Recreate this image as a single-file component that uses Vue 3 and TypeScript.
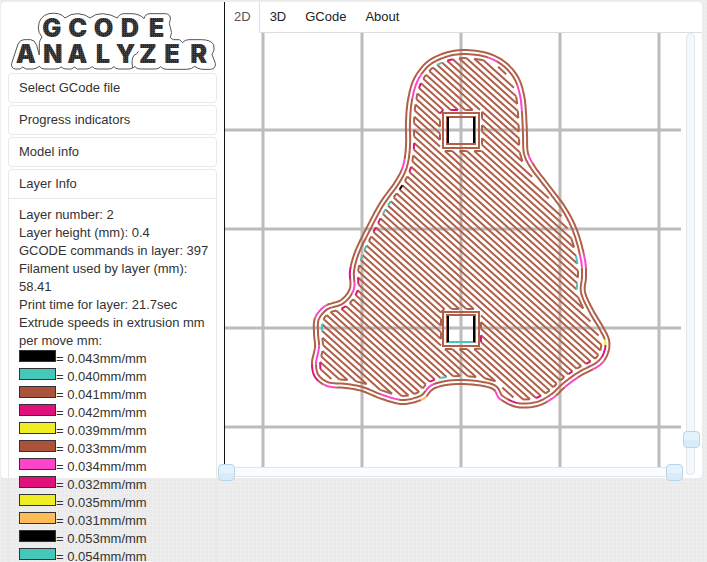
<script setup lang="ts">
import { ref } from 'vue'

type Point = [number, number]
interface Spot { x: number; y: number; r: number; color: string; ring?: number }
interface Stroke { d: string; color: string }

const BROWN = '#b05f48'
const TEAL = '#45c7ba'
const MAGENTA = '#e0117b'
const PINK = '#ff44cc'
const YELLOW = '#eeee22'
const ORANGE = '#ffbb55'

const tabs = ['2D', '3D', 'GCode', 'About']
const activeTab = ref('2D')
const layer = ref(7)
const progressStart = ref(0)
const progressEnd = ref(100)

const closedPanels = ['Select GCode file', 'Progress indicators', 'Model info']

const layerInfo = [
  'Layer number: 2',
  'Layer height (mm): 0.4',
  'GCODE commands in layer: 397',
  'Filament used by layer (mm): 58.41',
  'Print time for layer: 21.7sec',
  'Extrude speeds in extrusion mm per move mm:',
]

const speeds = [
  { color: '#000000', value: '0.043' },
  { color: TEAL, value: '0.040' },
  { color: '#a9533a', value: '0.041' },
  { color: MAGENTA, value: '0.042' },
  { color: YELLOW, value: '0.039' },
  { color: '#a9533a', value: '0.033' },
  { color: PINK, value: '0.034' },
  { color: MAGENTA, value: '0.032' },
  { color: YELLOW, value: '0.035' },
  { color: ORANGE, value: '0.031' },
  { color: '#000000', value: '0.053' },
  { color: TEAL, value: '0.054' },
]

const gridX = [263, 362, 461, 560, 659]
const gridY = [130, 229, 328, 427]

// Outer perimeter of the printed layer, counter-clockwise from the top
const outline: Point[] = [
  [464, 50], [445, 53], [427, 62], [414, 79], [408, 100], [406, 122], [406, 146],
  [403, 166], [395, 182], [380, 203], [366, 229], [355, 252], [350, 271], [350, 288],
  [341, 300], [325, 306], [315, 318], [314, 333], [315, 347], [312, 363], [315, 377],
  [327, 386], [346, 388], [362, 391], [382, 399], [403, 404], [423, 399], [435, 388],
  [460, 384], [491, 388], [500, 399], [517, 407], [537, 406], [553, 398], [565, 387],
  [580, 376], [600, 365], [608, 353], [609, 340], [603, 327], [593, 310], [585, 292],
  [586, 277], [585, 260], [578, 233], [567, 210], [551, 188], [535, 167], [528, 153],
  [527, 135], [526, 113], [524, 95], [518, 77], [505, 62], [487, 53],
]

const holes: Point[][] = [
  [[440, 110], [482, 110], [482, 151], [440, 151]],
  [[441, 309], [481, 309], [481, 349], [441, 349]],
]

const ringSpots: Spot[] = [
  { x: 415, y: 83, r: 13, color: PINK, ring: 1 },
  { x: 520, y: 98, r: 13, color: PINK, ring: 1 },
  { x: 495, y: 59, r: 5, color: PINK, ring: 1 },
  { x: 404, y: 164, r: 6, color: PINK, ring: 0 },
  { x: 530, y: 160, r: 5, color: PINK, ring: 0 },
  { x: 350, y: 272, r: 7, color: MAGENTA, ring: 0 },
  { x: 354, y: 286, r: 6, color: PINK, ring: 1 },
  { x: 321, y: 310, r: 9, color: PINK, ring: 0 },
  { x: 318, y: 355, r: 10, color: PINK, ring: 1 },
  { x: 313, y: 372, r: 9, color: MAGENTA, ring: 0 },
  { x: 328, y: 386, r: 6, color: PINK, ring: 0 },
  { x: 388, y: 397, r: 9, color: PINK, ring: 1 },
  { x: 423, y: 399, r: 4, color: ORANGE, ring: 0 },
  { x: 430, y: 389, r: 5, color: PINK, ring: 1 },
  { x: 501, y: 394, r: 6, color: PINK, ring: 0 },
  { x: 512, y: 401, r: 6, color: MAGENTA, ring: 1 },
  { x: 551, y: 399, r: 6, color: PINK, ring: 0 },
  { x: 570, y: 382, r: 8, color: PINK, ring: 0 },
  { x: 598, y: 366, r: 7, color: PINK, ring: 0 },
  { x: 604, y: 352, r: 6, color: MAGENTA, ring: 1 },
  { x: 605, y: 343, r: 3, color: YELLOW, ring: 1 },
  { x: 585, y: 262, r: 6, color: PINK, ring: 0 },
  { x: 581, y: 262, r: 6, color: PINK, ring: 1 },
]

const turnSpots: Spot[] = [
  [417, 85, MAGENTA], [450, 57, MAGENTA], [439, 63, TEAL], [474, 58, TEAL], [505, 69, PINK],
  [414, 101, TEAL], [520, 151, TEAL], [413, 148, MAGENTA], [410, 171, MAGENTA],
  [401, 189, '#000000'], [389, 205, TEAL], [383, 213, TEAL], [378, 221, MAGENTA],
  [373, 229, MAGENTA], [363, 248, TEAL], [361, 258, TEAL], [357, 281, MAGENTA],
  [354, 292, MAGENTA], [341, 306, MAGENTA], [321, 327, TEAL], [319, 365, MAGENTA],
  [323, 377, YELLOW], [436, 381, MAGENTA], [448, 379, TEAL], [578, 263, TEAL],
  [578, 290, TEAL], [534, 398, MAGENTA], [543, 394, MAGENTA], [573, 371, MAGENTA],
  [591, 360, MAGENTA], [502, 391, TEAL], [481, 338, MAGENTA], [441, 317, MAGENTA],
  [443, 110, MAGENTA], [457, 110, MAGENTA], [471, 151, MAGENTA],
].map(([x, y, color]) => ({ x: x as number, y: y as number, r: 5, color: color as string }))

function smooth(points: Point[], steps = 8): Point[] {
  const n = points.length
  const result: Point[] = []
  for (let i = 0; i < n; i++) {
    const [a, b, c, d] = [-1, 0, 1, 2].map((o) => points[(i + o + n) % n])
    for (let s = 0; s < steps; s++) {
      const t = s / steps
      const at = (k: 0 | 1) =>
        0.5 * (2 * b[k] + (c[k] - a[k]) * t + (2 * a[k] - 5 * b[k] + 4 * c[k] - d[k]) * t * t
          + (3 * b[k] - a[k] - 3 * c[k] + d[k]) * t * t * t)
      result.push([at(0), at(1)])
    }
  }
  return result
}

function inset(points: Point[], distance: number): Point[] {
  const n = points.length
  return points.map(([x, y], i) => {
    const p = points[(i - 3 + n) % n]
    const q = points[(i + 3) % n]
    const dx = q[0] - p[0]
    const dy = q[1] - p[1]
    const len = Math.hypot(dx, dy) || 1
    return [x + (dy / len) * distance, y - (dx / len) * distance]
  })
}

const toPath = (points: Point[]) =>
  'M' + points.map(([x, y]) => `${x.toFixed(1)} ${y.toFixed(1)}`).join('L')

function spotColor(p: Point, spots: Spot[]): string {
  const hit = spots.find((s) => Math.hypot(s.x - p[0], s.y - p[1]) <= s.r)
  return hit ? hit.color : BROWN
}

function colorRing(points: Point[], ring: number): Stroke[] {
  const spots = ringSpots.filter((s) => s.ring === ring)
  const strokes: Stroke[] = []
  let run: Point[] = [points[0]]
  let color = spotColor(points[0], spots)
  for (let i = 1; i <= points.length; i++) {
    const p = points[i % points.length]
    run.push(p)
    const next = spotColor(p, spots)
    if (next !== color || i === points.length) {
      strokes.push({ d: toPath(run), color })
      run = [p]
      color = next
    }
  }
  return strokes
}

const SLOPE = 0.9
const SPACING = 6.6

function hatch(boundary: Point[]): Stroke[] {
  const shapes = [boundary, ...holes]
  const rows: [Point, Point][][] = []
  for (let c = -520; c < 150; c += SPACING) {
    const hits: Point[] = []
    for (const shape of shapes) {
      shape.forEach((p, i) => {
        const q = shape[(i + 1) % shape.length]
        const fp = p[1] - SLOPE * p[0] - c
        const fq = q[1] - SLOPE * q[0] - c
        if (fp < 0 !== fq < 0) {
          const t = fp / (fp - fq)
          hits.push([p[0] + (q[0] - p[0]) * t, p[1] + (q[1] - p[1]) * t])
        }
      })
    }
    hits.sort((u, v) => u[0] - v[0])
    const row: [Point, Point][] = []
    for (let i = 0; i + 1 < hits.length; i += 2) row.push([hits[i], hits[i + 1]])
    rows.push(row)
  }
  const strokes: Stroke[] = []
  rows.forEach((row, k) => {
    const side = k % 2
    for (const segment of row) {
      strokes.push({ d: toPath(segment), color: BROWN })
      const from = segment[side]
      const to = (rows[k + 1] ?? [])
        .map((s) => s[side])
        .find((p) => Math.hypot(p[0] - from[0], p[1] - from[1]) < 13)
      if (to) {
        const mid: Point = [(from[0] + to[0]) / 2, (from[1] + to[1]) / 2]
        strokes.push({ d: toPath([from, to]), color: spotColor(mid, turnSpots) })
      }
    }
  })
  return strokes.sort((a, b) => Number(a.color !== BROWN) - Number(b.color !== BROWN))
}

const perimeter = smooth(outline)
const infill = hatch(inset(perimeter, 8))
const rings = [...colorRing(perimeter, 0), ...colorRing(inset(perimeter, 4), 1)]
</script>

<template>
  <div class="page">
    <main class="panel">
      <aside class="sidebar">
        <svg class="logo" viewBox="24 24 627 192" role="img" aria-label="GCODE ANALYZER">
          <defs>
            <pattern id="mesh" width="6" height="6" patternUnits="userSpaceOnUse">
              <rect width="6" height="6" fill="#2c2c2c" />
              <rect width="3" height="3" fill="#505050" />
            </pattern>
          </defs>
          <path
            class="rim"
            d="M126 111Q114 98 115 82Q117 48 147 41Q180 35 195 54Q212 40 234 41Q258 43 270 54Q286 40 308 41Q335 43 352 54Q358 41 374 41H396Q420 42 432 56Q436 41 450 41H496Q512 42 511 58Q505 72 511 82Q518 98 511 113Q517 118 520 119H538L548 128Q554 119 566 119H604Q632 119 641 134Q646 150 636 164Q642 178 646 190Q648 206 632 208H606Q592 206 584 199Q576 208 560 208H500Q488 208 482 200Q476 207 466 207H424Q408 207 405 199Q398 206 388 207H356Q346 206 342 200Q336 207 326 207H294Q282 207 277 200Q270 207 258 207H232L224 201L214 207H198Q188 206 184 201Q176 207 166 207H132Q124 206 118 199Q108 207 98 207H78L68 201L60 207H46Q32 204 35 190L54 132Q60 119 72 119H92Q104 119 110 136L118 165V128Q119 122 126 111Z"
          />
          <path class="rim" d="M398 204Q393 178 402 166Q412 162 415 154" />
          <text class="ink" x="127 205 281 362 446" y="112">GCODE</text>
          <text class="ink" x="47 129 202 287 347 417 493 571" y="190">ANALYZER</text>
        </svg>
        <section v-for="title in closedPanels" :key="title" class="card">
          <button class="card-title" type="button">{{ title }}</button>
        </section>
        <section class="card">
          <button class="card-title" type="button">Layer Info</button>
          <div class="card-body">
            <p v-for="line in layerInfo" :key="line">{{ line }}</p>
            <ul class="speeds">
              <li v-for="speed in speeds" :key="speed.value">
                <span class="swatch" :style="{ background: speed.color }"></span>= {{ speed.value }}mm/mm
              </li>
            </ul>
          </div>
        </section>
      </aside>

      <section class="viewer">
        <nav class="tabs">
          <a
            v-for="tab in tabs"
            :key="tab"
            href="#"
            :class="{ active: tab === activeTab }"
            @click.prevent="activeTab = tab"
          >{{ tab }}</a>
        </nav>
        <div class="stage">
          <div class="plot">
            <svg class="canvas" viewBox="225 33 456 434" role="img" aria-label="Layer preview">
              <g class="grid">
                <line v-for="x in gridX" :key="x" :x1="x" :x2="x" y1="33" y2="467" />
                <line v-for="y in gridY" :key="y" x1="225" x2="681" :y1="y" :y2="y" />
              </g>
              <g class="infill">
                <path v-for="(s, i) in infill" :key="i" :d="s.d" :stroke="s.color" />
              </g>
              <g class="rings">
                <path v-for="(s, i) in rings" :key="i" :d="s.d" :stroke="s.color" />
                <rect x="443" y="113" width="36" height="35" />
                <rect x="447" y="117" width="28" height="27" />
                <rect x="443" y="312" width="36" height="34" />
                <rect x="447" y="315" width="28" height="27" />
              </g>
              <path class="teal" d="M448 342H474" />
              <path class="dark" d="M448 117V143M474 117V143M448 316V342M474 316V342" />
            </svg>
            <div class="progress">
              <input v-model.number="progressStart" type="range" aria-label="First command" />
              <input v-model.number="progressEnd" type="range" aria-label="Last command" />
            </div>
          </div>
          <div class="layers">
            <input v-model.number="layer" type="range" aria-label="Layer" />
          </div>
        </div>
      </section>
    </main>
  </div>
</template>

<style>
body {
  margin: 0;
  background-color: #eaeaea;
}
</style>

<style scoped>
.page {
  box-sizing: border-box;
  height: 100vh;
  overflow: hidden;
  padding: 2px 5px 0 1px;
  font: 13px/18px "Liberation Sans", Arial, sans-serif;
  color: #333;
  background-color: #eaeaea;
  background-image:
    repeating-linear-gradient(0deg, rgba(255, 255, 255, 0.18) 0 1px, transparent 1px 4px),
    repeating-linear-gradient(90deg, rgba(255, 255, 255, 0.18) 0 1px, transparent 1px 4px);
}

.panel {
  display: flex;
  background: #fff;
  border-radius: 4px;
}

.sidebar {
  box-sizing: border-box;
  flex: 0 0 223px;
  height: 0;
  padding: 6px 7px 0;
}

.logo {
  display: block;
  width: 100%;
  margin-bottom: 1px;
}

.rim {
  fill: none;
  stroke: #555;
  stroke-width: 3;
  stroke-linejoin: round;
}

.ink {
  font: 900 76px Inter, "Liberation Sans", sans-serif;
  fill: url(#mesh);
}

.card {
  margin-bottom: 2px;
  border: 1px solid #e8e8e8;
  border-radius: 4px;
}

.card-title {
  display: block;
  width: 100%;
  padding: 5px 10px;
  border: 0;
  background: none;
  color: inherit;
  font: inherit;
  text-align: left;
}

.card-body {
  padding: 7px 4px 7px 10px;
  border-top: 1px solid #e8e8e8;
}

.card-body p {
  margin: 0;
}

.speeds {
  margin: 0;
  padding: 0;
  list-style: none;
}

.swatch {
  display: inline-block;
  box-sizing: border-box;
  width: 37px;
  height: 12px;
  border: 1px solid #333;
  vertical-align: 1px;
}

.viewer {
  flex: 1;
  min-width: 0;
  border-left: 1px solid #111;
}

.tabs {
  display: flex;
  gap: 1px;
  border-bottom: 1px solid #ddd;
}

.tabs a {
  margin-bottom: -1px;
  padding: 5px 8px;
  border: 1px solid transparent;
  border-top: 0;
  color: #222;
  line-height: 20px;
  text-decoration: none;
}

.tabs .active {
  border-color: #ddd #ddd #fff transparent;
  background: #fff;
  color: #555;
}

.stage {
  display: flex;
}

.plot {
  flex: 1;
  min-width: 0;
  padding-bottom: 1px;
}

.canvas {
  display: block;
  width: 100%;
  fill: none;
}

.grid {
  stroke: #bcbcbc;
  stroke-width: 3;
}

.infill {
  stroke-width: 2;
}

.rings {
  stroke: #b05f48;
  stroke-width: 2;
}

.teal {
  stroke: #45c7ba;
  stroke-width: 2;
}

.dark {
  stroke: #000;
  stroke-width: 2;
}

.progress {
  position: relative;
  box-sizing: border-box;
  height: 10px;
  border: 1px solid #e2e6e8;
  background: #f9fcfe;
}

input {
  appearance: none;
  margin: 0;
  background: none;
}

.progress input {
  position: absolute;
  top: -4px;
  left: -8px;
  width: calc(100% + 11px);
  height: 17px;
  pointer-events: none;
}

input::-webkit-slider-thumb {
  appearance: none;
  box-sizing: border-box;
  width: 17px;
  height: 17px;
  border: 1px solid #b8d6ea;
  border-radius: 4px;
  background: linear-gradient(#e5f2fb 50%, #d8ebf8 50%);
  pointer-events: auto;
}

.layers {
  position: relative;
  box-sizing: border-box;
  flex: 0 0 21px;
  padding: 0 7px 3px 5px;
}

.layers::before {
  content: "";
  display: block;
  box-sizing: border-box;
  height: 100%;
  border: 1px solid #e0e6e9;
  border-radius: 4px;
  background: #f4f8fa;
}

.layers input {
  position: absolute;
  top: 0;
  left: 2px;
  width: 17px;
  height: 100%;
  writing-mode: vertical-lr;
  direction: rtl;
}
</style>
